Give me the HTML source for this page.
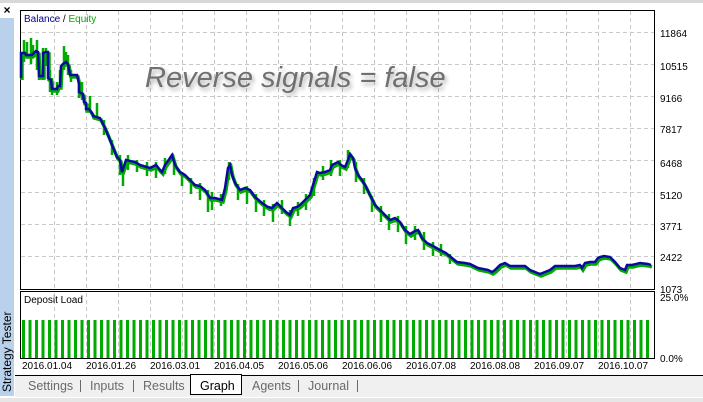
<!DOCTYPE html>
<html><head><meta charset="utf-8"><style>
body{margin:0;width:703px;height:402px;overflow:hidden;background:#fff;font-family:"Liberation Sans",sans-serif;}
</style></head><body>
<svg width="703" height="402" xmlns="http://www.w3.org/2000/svg" style="position:absolute;left:0;top:0" font-family="Liberation Sans, sans-serif">
<defs>
<pattern id="bars" x="22" y="0" width="6.5" height="402" patternUnits="userSpaceOnUse"><rect x="0" y="0" width="3" height="402" fill="#00aa00"/></pattern>
<filter id="sh"><feGaussianBlur stdDeviation="2"/></filter>
</defs>
<rect x="0" y="0" width="703" height="3" fill="#d8d8d8"/>
<rect x="0" y="398" width="703" height="4" fill="#e6e6e6"/>
<rect x="0" y="18" width="14" height="378" fill="#b9d1ea"/>
<text x="7" y="14" font-size="12" font-weight="bold" text-anchor="middle">×</text>
<text transform="translate(11,392) rotate(-90)" font-size="12" fill="#000">Strategy Tester</text>
<g stroke="#c8c8c8" stroke-dasharray="4,3" stroke-width="1">
<path d="M54.5 11V289M86.5 11V289M118.5 11V289M150.5 11V289M182.5 11V289M214.5 11V289M246.5 11V289M278.5 11V289M310.5 11V289M342.5 11V289M374.5 11V289M406.5 11V289M438.5 11V289M470.5 11V289M502.5 11V289M534.5 11V289M566.5 11V289M598.5 11V289M630.5 11V289"/>
<path d="M21 32.5H654M21 64.5H654M21 96.5H654M21 128.5H654M21 160.5H654M21 192.5H654M21 224.5H654M21 256.5H654"/>
<path d="M54.5 293V357M86.5 293V357M118.5 293V357M150.5 293V357M182.5 293V357M214.5 293V357M246.5 293V357M278.5 293V357M310.5 293V357M342.5 293V357M374.5 293V357M406.5 293V357M438.5 293V357M470.5 293V357M502.5 293V357M534.5 293V357M566.5 293V357M598.5 293V357M630.5 293V357"/>
</g>
<rect x="20.5" y="10.5" width="634" height="279" fill="none" stroke="#000"/>
<rect x="20.5" y="291.5" width="634" height="67" fill="none" stroke="#000"/>
<text x="24" y="22" font-size="10"><tspan fill="#00008b">Balance</tspan><tspan fill="#000"> / </tspan><tspan fill="#00aa00">Equity</tspan></text>
<text x="24" y="303" font-size="10" fill="#000">Deposit Load</text>
<g font-size="10" fill="#000">
<text x="660" y="37">11864</text><text x="660" y="70">10515</text><text x="660" y="102">9166</text><text x="660" y="133">7817</text><text x="660" y="167">6468</text><text x="660" y="199">5120</text><text x="660" y="230">3771</text><text x="660" y="261">2422</text><text x="660" y="293">1073</text>
<text x="660" y="301">25.0%</text><text x="660" y="362">0.0%</text>
<text x="22" y="369">2016.01.04</text><text x="86" y="369">2016.01.26</text><text x="150" y="369">2016.03.01</text><text x="214" y="369">2016.04.05</text><text x="278" y="369">2016.05.06</text><text x="342" y="369">2016.06.06</text><text x="406" y="369">2016.07.08</text><text x="470" y="369">2016.08.08</text><text x="534" y="369">2016.09.07</text><text x="598" y="369">2016.10.07</text>
</g>
<rect x="22" y="320" width="630" height="38" fill="url(#bars)"/>
<text x="147" y="90" font-size="29" font-style="italic" fill="#000" opacity="0.3" filter="url(#sh)">Reverse signals = false</text>
<text x="145" y="87" font-size="29" font-style="italic" fill="#707070">Reverse signals = false</text>
<g fill="none" stroke-linejoin="miter">
<path stroke="#00aa00" stroke-width="2.5" d="M24 40V62M27 42V58M31 38V64M33 45V58M37 40V70M39 55V80M43 48V80M46 48V66M50 70V92M52 78V95M57 82V95M60 70V86M64 46V70M66 52V66M68 55V75M71 70V82M79 80V98M82 82V100M90 96V112M97 103V118M104 120V135M112 140V155M120 155V175M123 165V186M128 155V170M137 160V172M147 162V176M156 162V178M165 158V174M174 160V175M182 172V186M191 178V194M200 183V200M208 190V212M212 192V210M221 194V206M229 162V180M238 184V200M247 186V204M256 194V212M264 200V216M273 204V222M282 200V214M290 210V226M298 202V216M306 194V210M314 178V196M323 166V180M331 160V176M340 160V176M348 150V168M356 162V182M364 178V194M372 196V212M381 206V222M389 214V230M398 216V232M406 226V244M415 226V240M424 232V250M433 242V256M441 244V256M450 254V264"/>
<polyline stroke="#00aa00" stroke-width="3.5" transform="translate(1,2)" points="21,78 21,53 25,53 26,55 32,55 34,53 36,51 38,52 39,76 43,76 43,53 46,52 48,52 48,78 51,80 52,89 57,89 58,86 60,86 61,66 63,64 66,62 68,64 70,75 77,75 79,84 79,92 83,94 84,102 86,103 86,109 89,109 92,113 93,116 100,118 105,128 110,140 114,150 117,157 120,160 122,172 126,160 135,162 140,165 150,168 156,165 160,170 162,172 165,165 170,158 172,155 175,165 180,172 185,175 190,180 195,185 200,186 205,190 210,198 215,198 222,200 225,188 228,168 230,165 232,175 235,183 240,190 245,188 250,190 255,197 262,203 268,207 272,208 277,203 280,206 286,212 290,215 293,208 297,207 300,205 305,200 310,195 313,185 317,172 320,173 325,172 330,170 332,165 338,162 341,165 345,167 348,160 350,154 353,158 355,168 358,175 362,180 365,185 370,195 375,205 380,210 385,215 390,220 395,218 400,222 405,230 410,234 415,231 418,230 422,238 427,243 433,246 440,250 446,253 452,258 457,262 465,263 470,264 478,268 488,270 492,272 495,270 500,265 505,263 510,266 525,266 530,270 540,274 545,272 550,270 555,266 575,266 580,265 582,268 585,263 590,262 595,262 598,258 600,257 604,256 610,257 615,262 620,268 625,270 627,265 632,265 640,263 648,264 651,265"/>
<polyline stroke="#0a0aa0" stroke-width="2.5" points="21,78 21,53 25,53 26,55 32,55 34,53 36,51 38,52 39,76 43,76 43,53 46,52 48,52 48,78 51,80 52,89 57,89 58,86 60,86 61,66 63,64 66,62 68,64 70,75 77,75 79,84 79,92 83,94 84,102 86,103 86,109 89,109 92,113 93,116 100,118 105,128 110,140 114,150 117,157 120,160 122,172 126,160 135,162 140,165 150,168 156,165 160,170 162,172 165,165 170,158 172,155 175,165 180,172 185,175 190,180 195,185 200,186 205,190 210,198 215,198 222,200 225,188 228,168 230,165 232,175 235,183 240,190 245,188 250,190 255,197 262,203 268,207 272,208 277,203 280,206 286,212 290,215 293,208 297,207 300,205 305,200 310,195 313,185 317,172 320,173 325,172 330,170 332,165 338,162 341,165 345,167 348,160 350,154 353,158 355,168 358,175 362,180 365,185 370,195 375,205 380,210 385,215 390,220 395,218 400,222 405,230 410,234 415,231 418,230 422,238 427,243 433,246 440,250 446,253 452,258 457,262 465,263 470,264 478,268 488,270 492,272 495,270 500,265 505,263 510,266 525,266 530,270 540,274 545,272 550,270 555,266 575,266 580,265 582,268 585,263 590,262 595,262 598,258 600,257 604,256 610,257 615,262 620,268 625,270 627,265 632,265 640,263 648,264 651,265"/>
</g>
<rect x="15" y="375" width="688" height="22" fill="#f0f0f0"/>
<line x1="15" y1="375.5" x2="703" y2="375.5" stroke="#000"/>
<rect x="190.5" y="374.5" width="51" height="20" fill="#fff" stroke="#000"/>
<line x1="191" y1="375.5" x2="241" y2="375.5" stroke="#fff"/>
<g font-size="12.5" fill="#6a6a6a">
<text x="28" y="390">Settings</text><text x="90" y="390">Inputs</text><text x="143" y="390">Results</text>
<text x="200" y="390" fill="#000">Graph</text><text x="252" y="390">Agents</text><text x="308" y="390">Journal</text>
</g>
<g stroke="#6a6a6a"><path d="M80.5 380V392M133.5 380V392M298.5 380V392M357.5 380V392"/></g>
</svg>
</body></html>
